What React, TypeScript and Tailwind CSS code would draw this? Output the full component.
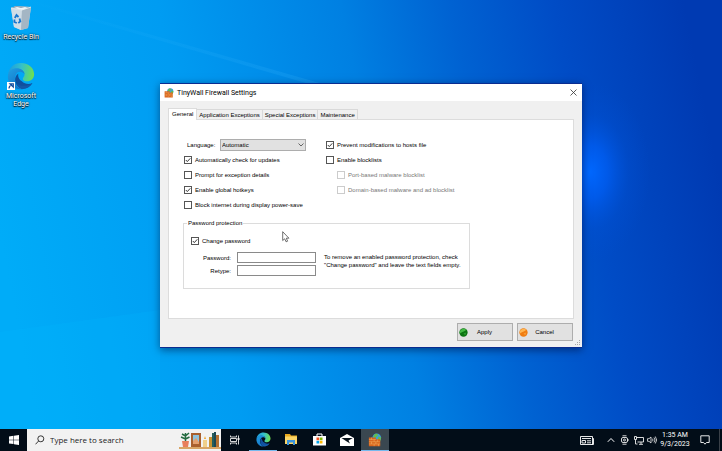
import { useState } from 'react';
import type { ReactNode } from 'react';

const TABS = ['General', 'Application Exceptions', 'Special Exceptions', 'Maintenance'];

function Wallpaper() {
    return (
        <svg className="absolute inset-0 w-full h-full" viewBox="0 0 722 429" preserveAspectRatio="none" aria-hidden="true">
            <defs>
                <linearGradient id="sky" x1="0" y1="0.56" x2="1" y2="0.44">
                    <stop offset="0" stopColor="#00acf8" />
                    <stop offset="0.28" stopColor="#009cf2" />
                    <stop offset="0.53" stopColor="#0080e2" />
                    <stop offset="0.68" stopColor="#0062d2" />
                    <stop offset="0.82" stopColor="#004cc6" />
                    <stop offset="1" stopColor="#003ab2" />
                </linearGradient>
                <radialGradient id="glow" gradientUnits="userSpaceOnUse" cx="0" cy="0" r="1" gradientTransform="translate(590 172) scale(60 90)">
                    <stop offset="0" stopColor="#0068ff" />
                    <stop offset="0.3" stopColor="#0060f8" stopOpacity="0.7" />
                    <stop offset="0.65" stopColor="#0054dc" stopOpacity="0.25" />
                    <stop offset="1" stopColor="#0050d8" stopOpacity="0" />
                </radialGradient>
                <linearGradient id="beam" x1="0" y1="0" x2="1" y2="0">
                    <stop offset="0" stopColor="#40c0ff" stopOpacity="0" />
                    <stop offset="1" stopColor="#40b8ff" stopOpacity="0.2" />
                </linearGradient>
            </defs>
            <rect width="722" height="429" fill="url(#sky)" />
            <path d="M30 0L330 86V90L20 0Z" fill="url(#beam)" />
            <path d="M0 332L160 310V429H0Z" fill="#00b8ff" fillOpacity="0.2" />
            <rect x="500" y="60" width="222" height="240" fill="url(#glow)" />
        </svg>
    );
}

function EdgeLogo({ className }: { className: string }) {
    return (
        <svg viewBox="0 0 32 32" className={className} aria-hidden="true">
            <defs>
                <linearGradient id="edgeTop" x1="0" y1="0.4" x2="1" y2="0.5">
                    <stop offset="0" stopColor="#1a9be0" />
                    <stop offset="0.5" stopColor="#35c1c9" />
                    <stop offset="1" stopColor="#6fe04e" />
                </linearGradient>
                <linearGradient id="edgeSide" x1="0" y1="0" x2="0.7" y2="1">
                    <stop offset="0" stopColor="#1fa0e4" />
                    <stop offset="1" stopColor="#1570c4" />
                </linearGradient>
            </defs>
            <path d="M1 15C2 6 8 1 16 1c9 0 15 6 15 13 0 5-4 8-8 8-3 0-5-1-5-3 0-1 2-2 2-5 0-4-4-6-9-6-5 0-9 3-10 7z" fill="url(#edgeTop)" />
            <path d="M1 15c1-5 5-8 10-8 5 0 9 3 9 7-1-2-3-3-5-3-4 0-6 4-6 9 0 5 3 10 8 11C8 32 0 24 1 15z" fill="url(#edgeSide)" />
            <path d="M13 13c-4 3-5 8-2 13 3 5 13 7 18-2-4 2-9 1-12-2-3-2-5-5-4-9z" fill="#0f4f9e" />
            <path d="M10 23c4 6 14 5 19 1-3 5-8 7-12 7-3-1-6-4-7-8z" fill="#1458a8" />
        </svg>
    );
}

function RecycleBin() {
    return (
        <svg viewBox="0 0 22 26" className="w-[22px] h-[26px]" aria-hidden="true">
            <path d="M1 3L6 1l15 1-3 21-7 2-7-3z" fill="#c3d3de" />
            <path d="M1 3l11 2-1 20-7-3z" fill="#d0dde6" />
            <path d="M12 5l9-3-3 21-7 2z" fill="#a4b6c4" />
            <path d="M1 3L6 1l15 1-9 3z" fill="#8da5b7" />
            <path d="M4 3l3-1 4 1 4-1 3 1-6 2z" fill="#f1f5f7" />
            <path d="M1 3l11 2 9-3" fill="none" stroke="#eff6fa" strokeWidth="0.7" />
            <g fill="none" stroke="#1976cf" strokeWidth="1.8">
                <path d="M4.800 13L6.500 10l2 2" />
                <path d="M9.500 13.500l.8 3-2 1.500" />
                <path d="M6.800 18l-2.500-1 .2-2.500" />
            </g>
        </svg>
    );
}

function FirewallIcon({ className }: { className: string }) {
    return (
        <svg viewBox="0 0 16 16" className={className} aria-hidden="true">
            <circle cx="10" cy="5.500" r="5" fill="#3f9fd8" />
            <path d="M8 1c3-1 4 1 3 2L8 6 6 4zM12 4l3 1-1 4-3-1z" fill="#63c04b" />
            <path d="M1 5h8v2h5v8H1z" fill="#d8641c" />
            <path d="M1 7.500h8M1 10h13M1 12.500h13M4 5v2.500M7 7.500V10M4 10v2.500M9 10v2.500M7 12.500V15M12 12.500V15M11 7.500V10" stroke="#f8c070" strokeWidth="0.5" />
        </svg>
    );
}

interface CheckProps {
    label: string;
    checked?: boolean;
    disabled?: boolean;
}

function Check({ label, checked = false, disabled = false }: CheckProps) {
    const [on, setOn] = useState(checked);
    return (
        <label className={`flex items-center gap-[3px] h-[15px] whitespace-nowrap ${disabled ? 'text-[#777]' : ''}`}>
            <span className="grid w-2 h-2 shrink-0">
                <input
                    type="checkbox"
                    checked={on}
                    disabled={disabled}
                    onChange={e => setOn(e.target.checked)}
                    className="col-start-1 row-start-1 appearance-none w-2 h-2 border border-[#555] bg-white disabled:border-[#ccc]"
                />
                {on && (
                    <svg viewBox="0 0 8 8" className="col-start-1 row-start-1 w-2 h-2 pointer-events-none" aria-hidden="true">
                        <path d="M1.800 4L3.300 5.600 6.300 2.300" fill="none" stroke="#222" strokeWidth="0.9" />
                    </svg>
                )}
            </span>
            {label}
        </label>
    );
}

function DialogButton({ color, shade, children }: { color: string; shade: string; children: ReactNode }) {
    return (
        <button type="button" className="flex items-center w-14 h-[18px] pl-px pr-[11px] bg-[#e1e1e1] border border-[#adadad]">
            <svg viewBox="0 0 10 10" className="w-[9px] h-[9px]" aria-hidden="true">
                <circle cx="5" cy="5" r="4.600" fill={shade} />
                <path d="M1 6a4.200 4.200 0 0 1 7-4C7 4 4 4 1 6z" fill={color} />
                <path d="M5 6l3-1-1 3z" fill={color} fillOpacity="0.6" />
            </svg>
            <span className="flex-1 text-center">{children}</span>
        </button>
    );
}

function SettingsWindow() {
    const [tab, setTab] = useState('General');

    return (
        <section className="absolute left-40 top-[83px] w-[422px] bg-[#f0f0f0] border-t border-b border-[#0a2c90] shadow-[0_2px_8px_rgba(0,0,40,0.5)] text-[6px] leading-[8px] text-black font-['Liberation_Sans',sans-serif]">
            <header className="flex items-center h-[17px] pl-1 pr-1 gap-[3px] bg-white">
                <FirewallIcon className="w-[10px] h-[10px]" />
                <h1 className="flex-1 font-['Roboto',sans-serif] text-[7px]">TinyWall Firewall Settings</h1>
                <button type="button" aria-label="Close">
                    <svg viewBox="0 0 9 9" className="w-[9px] h-[9px]" aria-hidden="true">
                        <path d="M1.500 1.500l6 6M7.500 1.500l-6 6" stroke="#333" strokeWidth="0.8" />
                    </svg>
                </button>
            </header>

            <div className="px-2 pt-[7px]">
                <div role="tablist" className="flex items-end">
                    {TABS.map(t => (
                        <button
                            key={t}
                            type="button"
                            role="tab"
                            aria-selected={t === tab}
                            onClick={() => setTab(t)}
                            className={t === tab
                                ? 'relative h-3 -mb-px px-[3px] pb-[2px] bg-white border border-b-0 border-[#dcdcdc]'
                                : 'h-[10px] px-[2px] bg-[#f0f0f0] border border-l-0 border-b-0 border-[#d9d9d9]'}
                        >
                            {t}
                        </button>
                    ))}
                </div>

                <div className="bg-white border border-[#dcdcdc] px-[14px] pt-[17px] pb-[29px]">
                    <div className="flex">
                        <div className="w-[142px] pl-px">
                            <div className="flex items-center h-[15px]">
                                <label htmlFor="language" className="w-9 pl-[3px]">Language:</label>
                                <div className="grid items-center">
                                    <select id="language" className="col-start-1 row-start-1 appearance-none w-[86px] h-3 pl-px bg-[#e1e1e1] border border-[#adadad]">
                                        <option>Automatic</option>
                                    </select>
                                    <svg viewBox="0 0 6 4" className="col-start-1 row-start-1 justify-self-end w-[6px] h-1 mr-[2px] pointer-events-none" aria-hidden="true">
                                        <path d="M.5.5L3 3 5.500.5" fill="none" stroke="#444" strokeWidth="0.8" />
                                    </svg>
                                </div>
                            </div>
                            <Check label="Automatically check for updates" checked />
                            <Check label="Prompt for exception details" />
                            <Check label="Enable global hotkeys" checked />
                            <Check label="Block internet during display power-save" />
                        </div>
                        <div className="pl-px">
                            <Check label="Prevent modifications to hosts file" checked />
                            <Check label="Enable blocklists" />
                            <div className="pl-[11px]">
                                <Check label="Port-based malware blocklist" disabled />
                                <Check label="Domain-based malware and ad blocklist" disabled />
                            </div>
                        </div>
                    </div>

                    <fieldset className="mt-[7px] w-[287px] border border-[#dcdcdc] px-[7px] pb-3">
                        <legend className="-ml-1 px-px">Password protection</legend>
                        <div className="pt-[6px]"><Check label="Change password" checked /></div>
                        <div className="flex pt-1">
                            <div className="grid grid-cols-[auto_auto] items-center gap-x-[6px] gap-y-[2px] pl-3">
                                <label htmlFor="password" className="text-right">Password:</label>
                                <input id="password" type="password" className="w-[79px] h-[11px] px-px bg-white border border-[#8a8a8a]" />
                                <label htmlFor="retype" className="text-right">Retype:</label>
                                <input id="retype" type="password" className="w-[79px] h-[11px] px-px bg-white border border-[#8a8a8a]" />
                            </div>
                            <p className="pl-2 pt-px whitespace-nowrap">
                                To remove an enabled password protection, check<br />
                                "Change password" and leave the text fields empty.
                            </p>
                        </div>
                    </fieldset>
                </div>
            </div>

            <footer className="flex justify-end gap-1 pt-1 pb-[6px] pr-[9px]">
                <DialogButton color="#43b944" shade="#0c7412">Apply</DialogButton>
                <DialogButton color="#ffb652" shade="#f07d12">Cancel</DialogButton>
            </footer>
            <svg viewBox="0 0 6 6" className="absolute right-px bottom-px w-[6px] h-[6px]" fill="#a8a8a8" aria-hidden="true">
                <path d="M4 0h1v1H4zM4 2h1v1H4zM4 4h1v1H4zM2 2h1v1H2zM2 4h1v1H2zM0 4h1v1H0z" />
            </svg>
        </section>
    );
}

function SearchArt() {
    return (
        <svg viewBox="0 0 42 20" className="w-[42px] h-5" aria-hidden="true">
            <rect y="17" width="42" height="2" fill="#d9a566" />
            <path d="M3 11h7l-1 6H4z" fill="#e87f5c" />
            <path d="M6.500 11V3M6.500 9L2 7M6.500 9l4-2M6.500 6L3 4M6.500 6L10 3" stroke="#246b40" strokeWidth="1.500" />
            <rect x="12" y="3" width="10" height="14" fill="#a9602e" />
            <rect x="14" y="5" width="6" height="9" fill="#8fc2dc" />
            <path d="M14 11l3-3 3 4v2h-6z" fill="#e4a06f" />
            <rect x="24" y="10" width="4" height="7" fill="#f0d08a" />
            <path d="M26 6l1 3h-2z" fill="#f0a52c" />
            <rect x="30" y="7" width="3" height="10" fill="#c89231" />
            <rect x="33" y="3" width="2" height="14" fill="#255e5d" />
            <rect x="35" y="2" width="2" height="15" fill="#1c4855" />
            <rect x="37" y="5" width="3" height="12" fill="#b47032" />
        </svg>
    );
}

function TaskButton({ label, state = '', children }: { label: string; state?: 'open' | 'active' | ''; children: ReactNode }) {
    return (
        <button
            type="button"
            aria-label={label}
            className={`flex items-center justify-center w-7 h-full border-b ${state === 'active' ? 'bg-[#3a4750] border-[#76b9ed]' : state === 'open' ? 'border-[#76b9ed]' : 'border-transparent'}`}
        >
            {children}
        </button>
    );
}

function Taskbar() {
    return (
        <footer className="relative flex items-center h-[22px] bg-[#020d18] text-white font-['Open_Sans','Noto_Sans',sans-serif]">
            <button type="button" aria-label="Start" className="flex items-center justify-center w-[27px] h-full">
                <svg viewBox="0 0 10 10" className="w-[10px] h-[10px]" fill="#fff" aria-hidden="true">
                    <path d="M0 1.400L4.500.8v3.900H0zM5 .7L10 0v4.700H5zM0 5.200h4.500v3.900L0 8.500zM5 5.200h5V10l-5-.7z" />
                </svg>
            </button>
            <div className="flex items-center w-[194px] h-full pl-2 bg-[#f2f2f2]">
                <svg viewBox="0 0 10 10" className="w-[10px] h-[10px]" fill="none" stroke="#222" strokeWidth="0.9" aria-hidden="true">
                    <circle cx="5.800" cy="3.800" r="3" />
                    <path d="M3.600 6L.5 9.300" />
                </svg>
                <input type="text" aria-label="Search" placeholder="Type here to search" className="flex-1 min-w-0 pl-[5px] text-[8px] leading-[12px] bg-transparent text-[#222] placeholder:text-[#222] placeholder:opacity-100" />
                <SearchArt />
            </div>

            <nav className="flex h-full" aria-label="Tasks">
                <TaskButton label="Task View">
                    <svg viewBox="0 0 10 10" className="w-[10px] h-[10px]" fill="none" stroke="#eee" strokeWidth="0.9" aria-hidden="true">
                        <path d="M.5.5v1.500h6V.5M.5 9.500V8h6v1.500M.5 3.500h6v3h-6zM8.500.5v9" />
                        <path d="M7.500 3h2v2h-2z" fill="#eee" stroke="none" />
                    </svg>
                </TaskButton>
                <TaskButton label="Microsoft Edge" state="open"><EdgeLogo className="w-[15px] h-[15px]" /></TaskButton>
                <TaskButton label="File Explorer">
                    <svg viewBox="0 0 12 11" className="w-3 h-[11px]" aria-hidden="true">
                        <path d="M0 0h5l1 1.500h6V10H0z" fill="#e9a91f" />
                        <path d="M0 2.500h12V10H0z" fill="#fcd667" />
                        <path d="M2 6h8v5H8V8.500H4V11H2z" fill="#3a93dc" />
                    </svg>
                </TaskButton>
                <TaskButton label="Microsoft Store">
                    <svg viewBox="0 0 13 13" className="w-[13px] h-[13px]" aria-hidden="true">
                        <path d="M4 3.500V1h5v2.500" fill="none" stroke="#fff" />
                        <path d="M0 3h13v9.500H0z" fill="#fff" />
                        <path d="M3.500 4.500h2.700v2.700H3.500z" fill="#f25022" />
                        <path d="M6.800 4.500h2.700v2.700H6.800z" fill="#7fba00" />
                        <path d="M3.500 7.800h2.700v2.700H3.500z" fill="#00a4ef" />
                        <path d="M6.800 7.800h2.700v2.700H6.800z" fill="#ffb900" />
                    </svg>
                </TaskButton>
                <TaskButton label="Mail">
                    <svg viewBox="0 0 14 12" className="w-[14px] h-3" aria-hidden="true">
                        <path d="M0 4l7-4 7 4v8H0z" fill="#fff" />
                        <path d="M1.500 4h11.300L8.500 6.500l1.500 3L6 7z" fill="#06121c" />
                    </svg>
                </TaskButton>
                <TaskButton label="TinyWall" state="active"><FirewallIcon className="w-[14px] h-[14px]" /></TaskButton>
            </nav>

            <div className="flex items-center h-full ml-auto pr-[2px]">
                <svg viewBox="0 0 14 9" className="w-[14px] h-[9px] mr-[13px]" fill="none" stroke="#fff" strokeWidth="0.9" aria-hidden="true">
                    <path d="M.5.5h12v8H.5zM12.500 2.500h1v6h-2M2 2.500h9M2 4.500h3.500v2.500H2zM7 4.800h4M7 6.800h4" />
                </svg>
                <svg viewBox="0 0 8 8" className="w-2 h-2 mr-[5px]" fill="none" stroke="#fff" aria-hidden="true">
                    <path d="M.8 5.800L4 2.500l3.200 3.300" />
                </svg>
                <svg viewBox="0 0 9 10" className="w-[9px] h-[10px] mr-[5px]" fill="none" stroke="#eee" strokeWidth="0.9" aria-hidden="true">
                    <rect x="1.500" y="2.500" width="6" height="5" rx="1.500" />
                    <circle cx="4.500" cy="5" r="1" />
                    <path d="M2.500.8h4M2.500 9.200h4M8 4v2" />
                </svg>
                <svg viewBox="0 0 10 9" className="w-[10px] h-[9px] mr-[3px]" fill="none" stroke="#eee" strokeWidth="0.9" aria-hidden="true">
                    <path d="M2.500 1.500h7v4.500h-6M5 8.300h4M7 6v2.300M.5.5v3h2v-3zM1.500 3.500V8h2" />
                </svg>
                <svg viewBox="0 0 10 10" className="w-[10px] h-[10px] mr-[3px]" fill="none" stroke="#eee" strokeWidth="0.8" aria-hidden="true">
                    <path d="M.5 3.700h1.500L4 2v6L2 6.300H.5zM5.500 3.700q1 1.300 0 2.600M7 2.500q2 2.500 0 5M8.300 1.500q2.700 3.500 0 7" />
                </svg>
                <time className="flex flex-col items-center w-[30px] text-[7px] leading-[9px] font-['Roboto',sans-serif]">
                    <span>1:35 AM</span>
                    <span>9/3/2023</span>
                </time>
                <button type="button" aria-label="Notifications" className="flex items-center justify-center w-[30px] h-full border-r border-[#3a4048]">
                    <svg viewBox="0 0 10 10" className="w-[10px] h-[10px]" fill="none" stroke="#fff" strokeWidth="0.9" aria-hidden="true">
                        <path d="M.8.8h8.400v6.700H6.500L5 9.200 3.500 7.500H.8z" />
                    </svg>
                </button>
            </div>
        </footer>
    );
}

export default function App() {
    return (
        <div className="min-h-screen flex flex-col overflow-hidden">
            <main className="relative flex-1">
                <Wallpaper />
                <div className="relative flex flex-col items-center w-[42px] pt-[5px] gap-[21px] text-[7px] leading-[8px] text-white text-center font-['Roboto',sans-serif] [text-shadow:0_1px_1px_#000,0_0_2px_#000]">
                    <a href="#recycle-bin" className="flex flex-col items-center gap-[2px] whitespace-nowrap">
                        <RecycleBin />
                        Recycle Bin
                    </a>
                    <a href="#edge" className="flex flex-col items-center gap-[2px]">
                        <span className="relative">
                            <EdgeLogo className="w-7 h-7" />
                            <svg viewBox="0 0 8 8" className="absolute left-0 bottom-0 w-2 h-2" aria-hidden="true">
                                <path d="M0 0h8v8H0z" fill="#fff" />
                                <path d="M2 6.500q0-3 3-3.500M3 1.800h3.300V5z" fill="none" stroke="#174f9f" strokeWidth="1.200" />
                            </svg>
                        </span>
                        <span>Microsoft<br />Edge</span>
                    </a>
                </div>
                <SettingsWindow />
                <svg viewBox="0 0 8 12" className="absolute left-[282px] top-[231px] w-2 h-3" aria-hidden="true">
                    <path d="M.7.7v8.800l2-1.700 1.400 3 1.500-.6-1.300-3h2.600z" fill="#fff" stroke="#333" strokeWidth="0.7" />
                </svg>
            </main>
            <Taskbar />
        </div>
    );
}
